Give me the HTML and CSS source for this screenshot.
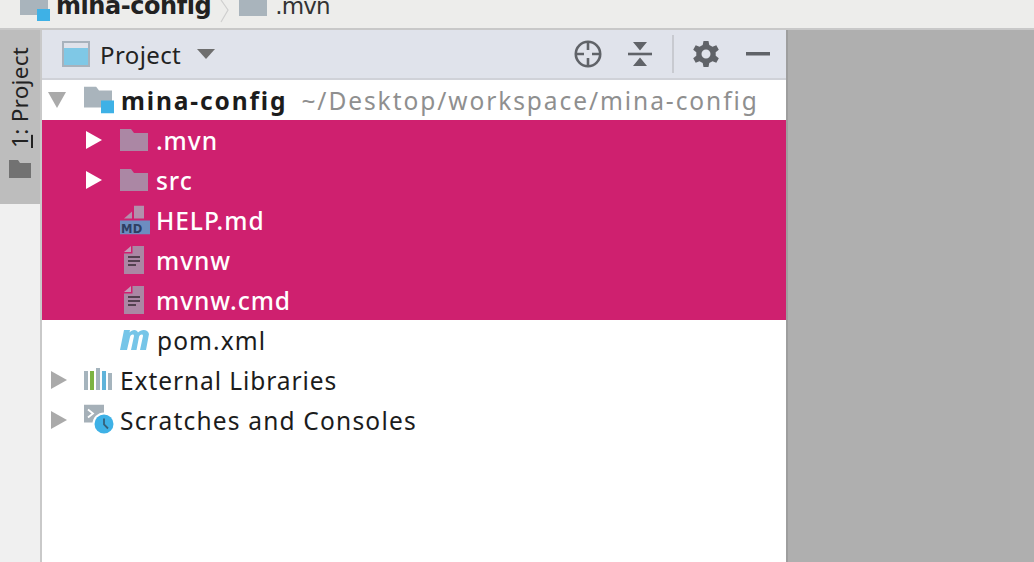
FILE: index.html
```html
<!DOCTYPE html>
<html lang="en">
<head>
<meta charset="utf-8">
<title>mina-config</title>
<link rel="stylesheet" href="styles.css">
</head>
<body>
<div class="crumbs">
  <svg class="crumb-ico" width="32" height="22" viewBox="0 0 32 22"><path d="M0 0H28V15H0Z" fill="#a9b4bc"/><rect x="17" y="9" width="13" height="12" fill="#3eb1e6"/></svg>
  <span class="crumb-b">mina-config</span>
  <svg class="crumb-sep" width="12" height="24" viewBox="0 0 12 24"><path d="M2 0L9 10L2 22" fill="none" stroke="#cfcfcf" stroke-width="1.2"/></svg>
  <svg class="crumb-ico2" width="28" height="16" viewBox="0 0 28 16"><rect width="28" height="16" fill="#a9b4bc"/></svg>
  <span class="crumb-t">.mvn</span>
</div>
<div class="main">
  <div class="strip">
    <div class="tab">
      <span class="tab-label"><u>1</u>: Project</span>
      <svg width="22" height="18" viewBox="0 0 22 18"><path d="M0 0H9L11 3H22V18H0Z" fill="#727272"/></svg>
    </div>
  </div>
  <div class="panel">
    <div class="head">
      <svg class="p-ico" width="28" height="26" viewBox="0 0 28 26"><rect width="28" height="26" fill="#a8b2bc"/><rect x="2" y="7" width="24" height="17" fill="#7fc8e6"/><rect x="2" y="2" width="24" height="5" fill="#dfe2ea"/></svg>
      <span class="head-title">Project</span>
      <svg class="caret" width="18" height="10" viewBox="0 0 18 10"><path d="M0 0H18L9 10Z" fill="#6e6e6e"/></svg>
      <span class="spacer"></span>
      <svg class="tool tool-locate" width="28" height="28" viewBox="0 0 28 28"><circle cx="14" cy="14" r="12.2" fill="none" stroke="#606368" stroke-width="2.6"/><path d="M14 2V10M14 18V26M2 14H10M18 14H26" stroke="#606368" stroke-width="2.6"/></svg>
      <svg class="tool tool-collapse" width="24" height="26" viewBox="0 0 24 26"><path d="M0 13H24" stroke="#606368" stroke-width="2.6"/><path d="M5 1H19L12 9.500Z M5 25H19L12 16.500Z" fill="#606368"/></svg>
      <span class="divider"></span>
      <svg class="tool tool-gear" width="26" height="28" viewBox="0 0 26 28"><path fill="#606368" fill-rule="evenodd" d="M10.500 1H15.500L16.300 5 19.500 6.700 23.300 5.300 25.800 9.700 22.700 12.300V15.700L25.800 18.300 23.300 22.700 19.500 21.300 16.300 23 15.500 27H10.500L9.700 23 6.500 21.300 2.700 22.700 .2 18.300 3.300 15.700V12.300L.2 9.700 2.700 5.300 6.500 6.700 9.700 5ZM13 9.500A4.500 4.500 0 1 0 13 18.500 4.500 4.500 0 1 0 13 9.500Z"/></svg>
      <svg class="tool tool-min" width="24" height="4" viewBox="0 0 24 4"><rect width="24" height="3.500" fill="#606368"/></svg>
    </div>
    <ul class="tree">
      <li class="row">
        <svg class="arrow arrow-root" width="18" height="16" viewBox="0 0 18 16"><path d="M0 0H18L9 16Z" fill="#aaa"/></svg>
        <svg class="ico ico-root" width="30" height="27" viewBox="0 0 30 27"><path d="M0 0H12L15 4H28V21H0Z" fill="#a9b4bc"/><rect x="17" y="14" width="13" height="13" fill="#3eb1e6"/></svg>
        <span class="name bold">mina-config</span><span class="path">~/Desktop/workspace/mina-config</span>
      </li>
      <li class="row sel">
        <svg class="arrow arrow-l2" width="16" height="18" viewBox="0 0 16 18"><path d="M0 0L16 9L0 18Z" fill="#fff"/></svg>
        <svg class="ico ico-l2" width="28" height="22" viewBox="0 0 28 22"><path d="M0 0H11L14 4H28V22H0Z" fill="#ab87a4"/></svg>
        <span class="name">.mvn</span>
      </li>
      <li class="row sel">
        <svg class="arrow arrow-l2" width="16" height="18" viewBox="0 0 16 18"><path d="M0 0L16 9L0 18Z" fill="#fff"/></svg>
        <svg class="ico ico-l2" width="28" height="22" viewBox="0 0 28 22"><path d="M0 0H11L14 4H28V22H0Z" fill="#ab87a4"/></svg>
        <span class="name">src</span>
      </li>
      <li class="row sel">
        <svg class="ico ico-file" width="30" height="29" viewBox="0 0 30 29"><path d="M4 13L12 6V13Z" fill="#b390ac"/><path d="M14 0H24V13H14Z" fill="#b390ac"/><rect y="15" width="30" height="14" fill="#6d8dc0"/><text x="1" y="27" class="md">MD</text></svg>
        <span class="name">HELP.md</span>
      </li>
      <li class="row sel">
        <svg class="ico ico-file" width="30" height="28" viewBox="0 0 30 28"><path d="M11 0V6H4Z" fill="#c49ab8"/><path d="M12.500 0H24V28H4V7.500H12.500Z" fill="#ab87a4"/><path d="M8 11H20M8 15H20M8 19H16" stroke="#53404f" stroke-width="1.800"/></svg>
        <span class="name">mvnw</span>
      </li>
      <li class="row sel">
        <svg class="ico ico-file" width="30" height="28" viewBox="0 0 30 28"><path d="M11 0V6H4Z" fill="#c49ab8"/><path d="M12.500 0H24V28H4V7.500H12.500Z" fill="#ab87a4"/><path d="M8 11H20M8 15H20M8 19H16" stroke="#53404f" stroke-width="1.800"/></svg>
        <span class="name">mvnw.cmd</span>
      </li>
      <li class="row">
        <svg class="ico ico-file" width="32" height="24" viewBox="0 0 32 24"><path d="M0 22L4 2H10L9.500 4.500C12 1 17 1 18 4.500 21 1 28 1 29 6L26 22H20L23 8C23 6 20 6 19 9L16.500 22H11L14 8C14 6 11 6 10 9L7 22Z" fill="#76c5e8"/></svg>
        <span class="name">pom.xml</span>
      </li>
      <li class="row">
        <svg class="arrow arrow-l1" width="16" height="18" viewBox="0 0 16 18"><path d="M0 0L16 9L0 18Z" fill="#aaa"/></svg>
        <svg class="ico ico-root" width="28" height="24" viewBox="0 0 28 24"><rect y="3" width="4" height="19" fill="#a5b4bd"/><rect x="6" y="3" width="4" height="19" fill="#7cb342"/><rect x="12" y="0" width="4" height="22" fill="#a5b4bd"/><rect x="18" y="3" width="4" height="19" fill="#60b4da"/><rect x="24" y="5" width="4" height="17" fill="#a5b4bd"/></svg>
        <span class="name name-root">External Libraries</span>
      </li>
      <li class="row">
        <svg class="arrow arrow-l1" width="16" height="18" viewBox="0 0 16 18"><path d="M0 0L16 9L0 18Z" fill="#aaa"/></svg>
        <svg class="ico ico-scr" width="32" height="31" viewBox="0 0 32 31"><rect width="20" height="18" fill="#a5b0b8"/><path d="M4 5L9 9L4 13" fill="none" stroke="#fff" stroke-width="1.800"/><circle cx="20" cy="19.500" r="11.500" fill="#fff"/><circle cx="20" cy="19.500" r="9.500" fill="#3eb1e6"/><path d="M20 14V20L24 24" fill="none" stroke="#35607a" stroke-width="1.800"/></svg>
        <span class="name name-scr">Scratches and Consoles</span>
      </li>
    </ul>
  </div>
  <div class="rest"></div>
</div>
</body>
</html>
```
FILE: styles.css
```css
html, body { margin: 0; padding: 0; }
body {
  width: 1034px;
  height: 562px;
  overflow: hidden;
  font-family: "DejaVu Sans", "Liberation Sans", sans-serif;
  background: #fff;
  color: #1c1c1c;
  display: flex;
  flex-direction: column;
}
.crumbs {
  height: 28px;
  box-sizing: border-box;
  background: #ededeb;
  display: flex;
  align-items: flex-start;
  overflow: hidden;
  padding-left: 20px;
  flex: none;
}
.crumb-ico { flex: none; margin-right: 4px; }
.crumb-b { font-weight: 700; font-size: 24px; line-height: 28px; margin-top: -8px; margin-right: 8px; letter-spacing: -0.45px; color: #222; }
.crumb-sep { flex: none; margin-right: 8px; }
.crumb-ico2 { flex: none; margin-right: 8px; }
.crumb-t { font-size: 23px; line-height: 28px; margin-top: -8px; letter-spacing: -0.8px; color: #333; }
.main {
  flex: 1;
  display: flex;
  min-height: 0;
  border-top: 2px solid #c8c8c8;
}
.strip {
  width: 40px;
  flex: none;
  background: #f0f0f0;
  border-right: 2px solid #c9c9c9;
}
.tab {
  height: 174px;
  background: #bdbdbd;
  display: flex;
  flex-direction: column;
  align-items: center;
  padding-top: 14px;
  box-sizing: border-box;
  gap: 12px;
}
.tab-label {
  writing-mode: vertical-rl;
  transform: rotate(180deg);
  font-size: 22.500px;
  line-height: 24px;
  letter-spacing: 0.3px;
  color: #222;
  font-family: "Noto Sans", sans-serif;
  height: 104px;
  white-space: nowrap;
}
.panel {
  width: 744px;
  flex: none;
  display: flex;
  flex-direction: column;
}
.head {
  height: 50px;
  box-sizing: border-box;
  background: #e0e3eb;
  border-bottom: 2px solid #d0d2d8;
  display: flex;
  align-items: center;
  padding-left: 20px;
  padding-right: 16px;
  flex: none;
}
.p-ico { flex: none; margin-right: 10px; }
.head-title { font-family: "Noto Sans", sans-serif; font-size: 24px; letter-spacing: 0.4px; color: #222; margin-right: 16px; }
.caret { flex: none; }
.spacer { flex: 1; }
.tool { flex: none; }
.tool-locate { margin-right: 26px; }
.tool-collapse { margin-right: 20px; }
.divider { width: 2px; height: 38px; background: #c8cad0; margin-right: 19px; flex: none; }
.tool-gear { margin-right: 27px; }
.tree { list-style: none; margin: 0; padding: 0; }
.row {
  height: 40px;
  display: flex;
  align-items: center;
  position: relative;
  font-size: 24.500px;
  white-space: nowrap;
}
.sel { background: #cf206f; color: #fff; }
.sel .name { font-weight: 500; letter-spacing: 0.95px; margin-left: 114px; }
.arrow { position: absolute; top: 50%; transform: translateY(-50%); }
.arrow-root { left: 6px; }
.arrow-l1 { left: 9px; }
.arrow-l2 { left: 44px; }
.ico { position: absolute; top: 50%; transform: translateY(-50%); }
.ico-root { left: 42px; }
.ico-l2 { left: 78px; }
.ico-file { left: 78px; }
.ico-scr { left: 42px; }
.md { font-family: "DejaVu Sans", sans-serif; font-size: 11.500px; font-weight: 700; fill: #2d3f63; letter-spacing: 0.4px; }
.name { margin-left: 115px; font-family: "Noto Sans", sans-serif; letter-spacing: 1.1px; }
.bold { margin-left: 79px; font-weight: 700; font-family: "Noto Sans", sans-serif; letter-spacing: 1.87px; }
.name-root { margin-left: 78px; letter-spacing: 0.92px; }
.name-scr { margin-left: 78px; letter-spacing: 1.2px; }
.path { margin-left: 14px; color: #8f8f8f; font-family: "Noto Sans", sans-serif; letter-spacing: 1.93px; }
.rest {
  flex: 1;
  background: #afafaf;
  border-left: 2px solid #9e9e9e;
}
```
